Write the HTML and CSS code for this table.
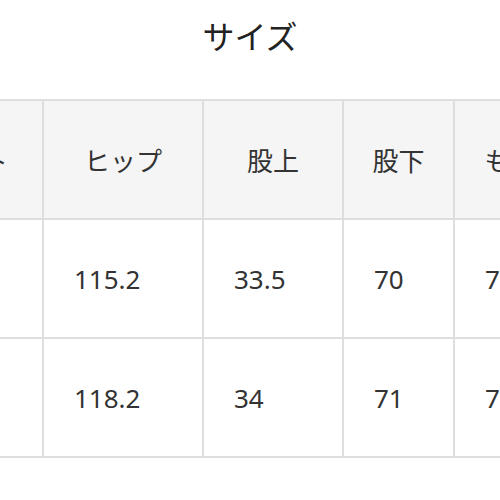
FILE: index.html
```html
<!DOCTYPE html>
<html lang="ja">
<head>
<meta charset="utf-8">
<link rel="stylesheet" href="styles.css">
</head>
<body>
<div class="page">
  <h2 class="title">サイズ</h2>
  <div class="table-wrap">
    <table class="size-table">
      <colgroup>
        <col class="c1"><col class="c2"><col class="c3"><col class="c4"><col class="c5">
      </colgroup>
      <thead>
        <tr><th>ウエスト</th><th>ヒップ</th><th>股上</th><th>股下</th><th>もも周り</th></tr>
      </thead>
      <tbody>
        <tr><td>70</td><td>115.2</td><td>33.5</td><td>70</td><td>70</td></tr>
        <tr><td>73</td><td>118.2</td><td>34</td><td>71</td><td>72</td></tr>
      </tbody>
    </table>
  </div>
</div>
</body>
</html>
```
FILE: styles.css
```css
html, body {
  margin: 0;
  padding: 0;
  background: #fff;
}
.page {
  width: 500px;
  height: 500px;
  overflow: hidden;
  font-family: "Noto Sans", "Noto Sans CJK JP", sans-serif;
  color: #333;
}
.title {
  margin: 0;
  height: 99px;
  padding-top: 14px;
  box-sizing: border-box;
  text-align: center;
  font-size: 32px;
  font-weight: 400;
  line-height: 46px;
  color: #222;
}
.table-wrap {
  margin-left: -132px;
}
.size-table {
  border-collapse: collapse;
  table-layout: fixed;
  width: 750px;
  font-size: 26px;
}
.c1 { width: 174px; }
.c2 { width: 160px; }
.c3 { width: 140px; }
.c4 { width: 111px; }
.c5 { width: 165px; }
.size-table th,
.size-table td {
  border: 2px solid #dedede;
  height: 117px;
  padding: 0;
  white-space: nowrap;
  overflow: hidden;
}
.size-table th {
  background: #f5f5f5;
  font-weight: 400;
  text-align: center;
}
.size-table td {
  text-align: left;
  padding-left: 30px;
}
```
